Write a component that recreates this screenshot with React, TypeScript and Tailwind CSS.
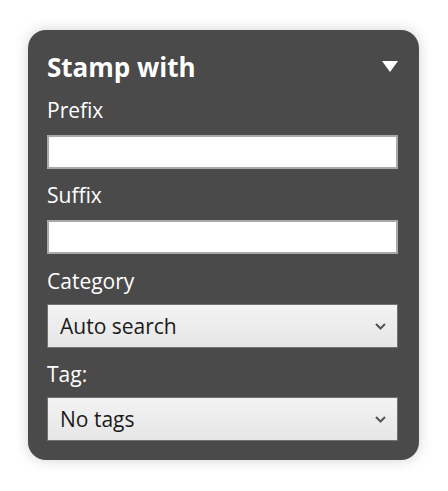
function Label({ children, className = "" }: { children: React.ReactNode; className?: string }) {
  return <div className={`text-[21px] leading-[28px] text-white ${className}`}>{children}</div>;
}

function TextBox() {
  return <div className="mt-[11px] h-[34px] w-full border-2 border-[#a9a9a9] bg-white" />;
}

function SelectBox({ value }: { value: string }) {
  return (
    <div className="mt-[9px] flex h-[44px] w-full items-center justify-between border border-[#727272] bg-gradient-to-b from-[#f3f3f3] to-[#e6e6e6] pl-[12px] pr-[11px]">
      <span className="text-[21px] leading-[28px] text-[#1b1b1b]">{value}</span>
      <svg width="11" height="7" viewBox="0 0 11 7" className="mt-[1px]">
        <polyline points="1,1 5.5,5.5 10,1" fill="none" stroke="#555" strokeWidth="2" />
      </svg>
    </div>
  );
}

export default function App() {
  return (
    <div
      className="min-h-[491px] w-[448px] bg-white pl-[28px] pt-[30px]"
      style={{ fontFamily: '"Open Sans", "Noto Sans", sans-serif' }}
    >
      <div className="flex h-[430px] w-[391px] flex-col rounded-[18px] bg-[#4a4a4a] pl-[19px] pr-[21px] pt-[21px] shadow-[0_0_14px_rgba(0,0,0,0.18)]">
        <div className="flex items-start justify-between">
          <h2 className="text-[26px] font-bold leading-[32px] text-white">Stamp with</h2>
          <svg width="16" height="11" viewBox="0 0 16 11" className="mt-[10px]">
            <polygon points="0,0 16,0 8,11" fill="white" />
          </svg>
        </div>
        <Label className="mt-[13px]">Prefix</Label>
        <TextBox />
        <Label className="mt-[12px]">Suffix</Label>
        <TextBox />
        <Label className="mt-[13px]">Category</Label>
        <SelectBox value="Auto search" />
        <Label className="mt-[12px]">Tag:</Label>
        <SelectBox value="No tags" />
      </div>
    </div>
  );
}
